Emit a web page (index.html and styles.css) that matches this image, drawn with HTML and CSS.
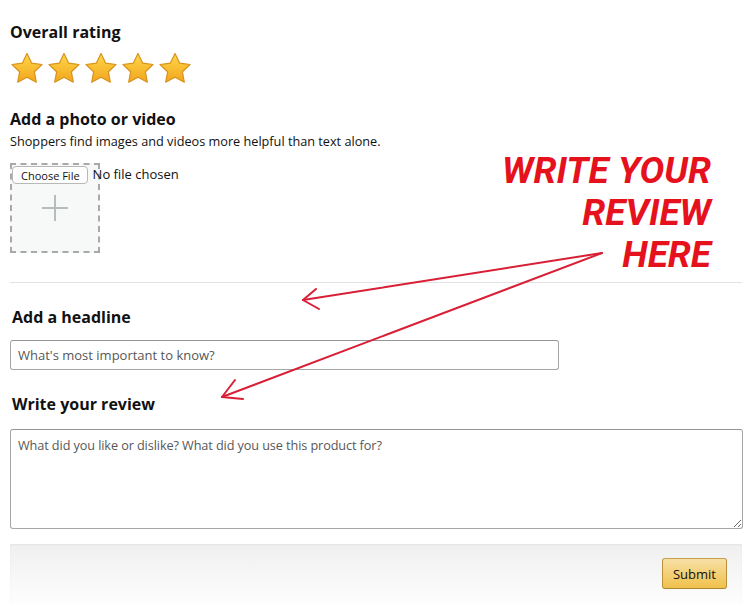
FILE: index.html
```html
<!DOCTYPE html>
<html lang="en">
<head>
    <meta charset="UTF-8">
    <meta name="viewport" content="width=device-width, initial-scale=1.0">
    <title>Write a review</title>
    <link rel="stylesheet" href="styles.css">
</head>
<body>
    <main class="review-form">
        <section class="block rating">
            <h2>Overall rating</h2>
            <div class="stars">
                <svg class="star" viewBox="0 0 34 32"><defs><linearGradient id="gold" x1="0" y1="0" x2="0" y2="1"><stop offset="0" stop-color="#ffd84a"/><stop offset="1" stop-color="#f2a51d"/></linearGradient></defs><path d="M17 1.5l4.6 9.6 10.4 1.4-7.6 7.3 1.9 10.4L17 25.2l-9.3 5 1.9-10.4L2 12.5l10.4-1.4z" fill="url(#gold)" stroke="#d7921c" stroke-width="1.2" stroke-linejoin="round"/></svg>
                <svg class="star" viewBox="0 0 34 32"><path d="M17 1.5l4.6 9.6 10.4 1.4-7.6 7.3 1.9 10.4L17 25.2l-9.3 5 1.9-10.4L2 12.5l10.4-1.4z" fill="url(#gold)" stroke="#d7921c" stroke-width="1.2" stroke-linejoin="round"/></svg>
                <svg class="star" viewBox="0 0 34 32"><path d="M17 1.5l4.6 9.6 10.4 1.4-7.6 7.3 1.9 10.4L17 25.2l-9.3 5 1.9-10.4L2 12.5l10.4-1.4z" fill="url(#gold)" stroke="#d7921c" stroke-width="1.2" stroke-linejoin="round"/></svg>
                <svg class="star" viewBox="0 0 34 32"><path d="M17 1.5l4.6 9.6 10.4 1.4-7.6 7.3 1.9 10.4L17 25.2l-9.3 5 1.9-10.4L2 12.5l10.4-1.4z" fill="url(#gold)" stroke="#d7921c" stroke-width="1.2" stroke-linejoin="round"/></svg>
                <svg class="star" viewBox="0 0 34 32"><path d="M17 1.5l4.6 9.6 10.4 1.4-7.6 7.3 1.9 10.4L17 25.2l-9.3 5 1.9-10.4L2 12.5l10.4-1.4z" fill="url(#gold)" stroke="#d7921c" stroke-width="1.2" stroke-linejoin="round"/></svg>
            </div>
        </section>

        <section class="block media">
            <h2>Add a photo or video</h2>
            <p class="hint">Shoppers find images and videos more helpful than text alone.</p>
            <div class="upload-box">
                <div class="file-row">
                    <button type="button" class="file-btn">Choose File</button>
                    <span class="file-name">No file chosen</span>
                </div>
                <span class="plus"></span>
            </div>
        </section>

        <hr class="divider">

        <section class="block headline">
            <h2>Add a headline</h2>
            <input type="text" class="text-input" placeholder="What's most important to know?">
        </section>

        <section class="block body-text">
            <h2>Write your review</h2>
            <textarea class="text-area" placeholder="What did you like or dislike? What did you use this product for?"></textarea>
        </section>

        <footer class="form-footer">
            <button type="button" class="submit-btn">Submit</button>
        </footer>
    </main>

    <!-- red annotation drawn on top of the form -->
    <div class="callout">WRITE YOUR<br>REVIEW<br>HERE</div>
    <svg class="arrows" width="745" height="604" viewBox="0 0 745 604">
        <g fill="none" stroke="#d81f36" stroke-width="2" stroke-linecap="round" stroke-linejoin="round">
            <path d="M602 253L303 300"/>
            <path d="M316 289L303 300L319 309"/>
            <path d="M602 253L222 397"/>
            <path d="M235 380L222 397L243 399"/>
        </g>
    </svg>
</body>
</html>
```

FILE: styles.css
```css
body {
    margin: 0;
    padding: 0;
    font-family: "Open Sans", Arial, sans-serif;
    color: #111111;
    background-color: #ffffff;
    width: 745px;
    height: 604px;
    overflow: hidden;
    position: relative;
}
.review-form {
    padding: 0 3px 0 10px;
}
h2 {
    margin: 0;
    font-size: 16px;
    font-weight: 700;
    line-height: 22px;
}
.rating {
    padding-top: 21px;
}
.stars {
    display: flex;
    gap: 3px;
    margin-top: 9px;
}
.star {
    width: 34px;
    height: 32px;
}
.media {
    margin-top: 24px;
}
.hint {
    margin: 2px 0 0;
    font-size: 12.7px;
    line-height: 18px;
}
.upload-box {
    position: relative;
    margin-top: 13px;
    width: 86px;
    height: 86px;
    border: 2px dashed #a9a9a9;
    background-color: #f7f8f8;
    display: flex;
    justify-content: center;
    align-items: center;
}
.file-row {
    position: absolute;
    top: 1px;
    left: 0;
    display: flex;
    align-items: center;
    gap: 5px;
    white-space: nowrap;
}
.file-btn {
    font-family: "Open Sans", Arial, sans-serif;
    font-size: 11px;
    color: #111111;
    padding: 0 7px 0 8px;
    height: 18px;
    border: 1px solid #b8b8b8;
    border-radius: 4px;
    background-color: #ffffff;
}
.file-name {
    font-size: 13px;
    margin-top: -2px;
}
.plus {
    position: relative;
    width: 26px;
    height: 26px;
}
.plus::before,
.plus::after {
    content: "";
    position: absolute;
    background-color: #b7bcbc;
}
.plus::before {
    left: 12px;
    top: 0;
    width: 2px;
    height: 26px;
}
.plus::after {
    top: 12px;
    left: 0;
    width: 26px;
    height: 2px;
}
.divider {
    margin: 29px 0 0;
    border: none;
    border-top: 1px solid #e3e3e3;
}
.headline {
    margin-top: 23px;
    padding-left: 2px;
}
.text-input {
    display: block;
    box-sizing: border-box;
    margin: 12px 0 0 -2px;
    width: 549px;
    height: 30px;
    padding: 0 7px;
    font-family: "Open Sans", Arial, sans-serif;
    font-size: 13px;
    border: 1px solid #a6a6a6;
    border-top-color: #949494;
    border-radius: 3px;
}
.body-text {
    margin-top: 23px;
    padding-left: 2px;
}
.text-area {
    display: block;
    box-sizing: border-box;
    margin: 14px 0 0 -2px;
    width: 733px;
    height: 100px;
    padding: 6px 7px;
    font-family: "Open Sans", Arial, sans-serif;
    font-size: 12.7px;
    letter-spacing: -0.1px;
    border: 1px solid #a6a6a6;
    border-top-color: #949494;
    border-radius: 3px;
    resize: vertical;
}
::placeholder {
    color: #575757;
}
.form-footer {
    margin-top: 15px;
    height: 70px;
    display: flex;
    justify-content: flex-end;
    align-items: flex-start;
    padding: 14px 15px 0 0;
    box-sizing: border-box;
    background: linear-gradient(#efefef, #fbfbfb 70%, #ffffff);
    box-shadow: inset 0 1px 2px rgba(0, 0, 0, 0.05);
}
.submit-btn {
    width: 65px;
    height: 31px;
    font-family: "Open Sans", Arial, sans-serif;
    font-size: 13px;
    color: #111111;
    border: 1px solid #a88734;
    border-color: #c6a04a #b8913a #a88734;
    border-radius: 3px;
    background: linear-gradient(#f7dfa5, #f0c14b);
}
.callout {
    position: absolute;
    top: 150px;
    right: 34px;
    text-align: right;
    font-family: Roboto, "Open Sans", sans-serif;
    font-style: italic;
    font-weight: 700;
    font-size: 37px;
    line-height: 42px;
    letter-spacing: 0;
    color: #e5121e;
}
.arrows {
    position: absolute;
    top: 0;
    left: 0;
    pointer-events: none;
}
```
